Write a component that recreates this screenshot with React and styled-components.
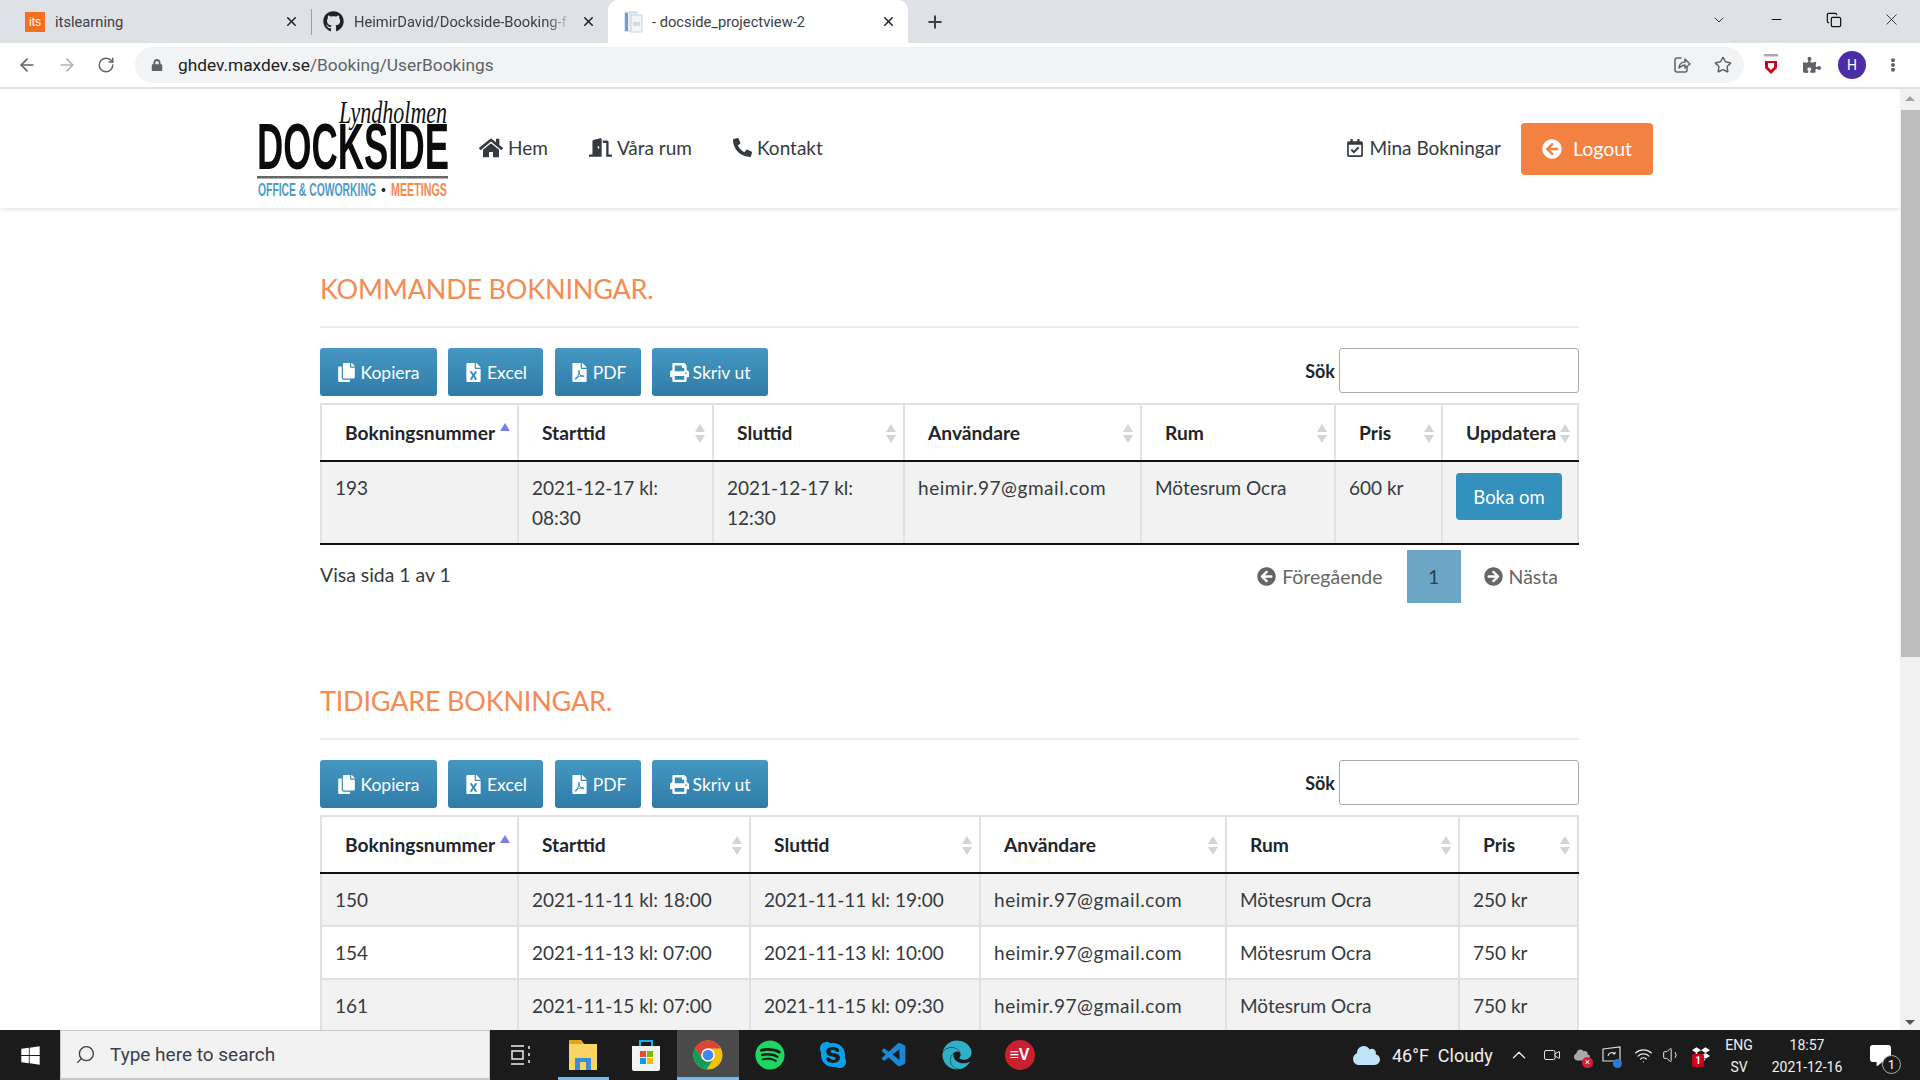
import React from "react";
import styled, { createGlobalStyle } from "styled-components";
import {
  FaHome, FaDoorOpen, FaPhone, FaRegCalendarCheck, FaArrowCircleLeft, FaArrowCircleRight,
  FaCopy, FaFileExcel, FaFilePdf, FaPrint, FaGithub, FaSpotify, FaSkype, FaWindows,
  FaPuzzlePiece, FaLock, FaCloud, FaDropbox, FaCommentAlt, FaEllipsisV, FaEdge,
} from "react-icons/fa";
import { VscVscode } from "react-icons/vsc";
import {
  ArrowLeft, ArrowRight, RotateCw, Star, Plus, X, ChevronDown, Minus, Copy, Search,
  ChevronUp, Video, Wifi, Volume1,
} from "lucide-react";

const Global = createGlobalStyle`
  html, body { margin: 0; padding: 0; height: 100%; overflow: hidden; background: #fff; }
  * { box-sizing: border-box; }
  #root { height: 100%; }
`;

const Shell = styled.div`
  height: 1080px; width: 1920px; display: flex; flex-direction: column; overflow: hidden;
  font-family: Lato, "Liberation Sans", sans-serif; color: #212529;
`;
const TabStrip = styled.div`
  height: 43px; background: #dee1e6; display: flex; align-items: stretch; flex: none;
`;
const Tab = styled.div`
  width: ${p => p.$w}px; padding-left: ${p => p.$pl}px; padding-right: 12px; display: flex; align-items: center;
  font: 14.7px Roboto, sans-serif; color: #3c4043; position: relative;
  background: ${p => p.$active ? "#fff" : "transparent"};
  border-radius: ${p => p.$active ? "10px 10px 0 0" : "0"};
`;
const TabDivider = styled.div`
  width: 1px; height: 26px; background: #9aa0a6; align-self: center; flex: none;
`;
const Favicon = styled.span`
  width: 20px; height: 20px; background: #f37021; color: #fff; font: 12px "Liberation Sans", sans-serif;
  display: flex; align-items: center; justify-content: center; flex: none;
`;
const TabTitle = styled.span`
  margin-left: ${p => p.$ml}px; width: ${p => p.$w}px; white-space: nowrap; overflow: hidden; flex: none;
  ${p => p.$fade ? "mask-image: linear-gradient(90deg, #000 88%, transparent);" : ""}
`;
const TabClose = styled.span`
  margin-left: auto; display: flex; color: #202124;
`;
const NewTab = styled.div`
  width: 54px; display: flex; align-items: center; justify-content: center; color: #3c4043;
`;
const WindowControls = styled.div`
  margin-left: auto; display: flex; align-items: center; color: #111;
`;
const WinButton = styled.div`
  width: 57.5px; display: flex; justify-content: center; padding-bottom: 4px;
`;
const Toolbar = styled.div`
  height: 46px; flex: none; background: #fff; border-bottom: 2px solid #e0e0e0; display: flex; align-items: flex-start;
  padding-top: 4px;
`;
const NavButtons = styled.div`
  width: 135px; height: 36px; display: flex; align-items: center; padding-left: 17px; gap: 20px; flex: none; color: #5f6368;
`;
const AddressBar = styled.div`
  width: 1609px; height: 36px; background: #f1f3f4; border-radius: 18px; display: flex; align-items: center; padding-left: 16px; flex: none;
`;
const Url = styled.span`
  font: 17.3px Roboto, sans-serif; color: #5f6368; margin-left: 15px;
  b { font-weight: 400; color: #202124; }
`;
const AddressActions = styled.div`
  margin-left: auto; display: flex; align-items: center; gap: 22px; color: #5f6368; padding-right: 12px;
`;
const ToolIcons = styled.div`
  display: flex; align-items: center; height: 36px; flex: 1; padding-left: 19px; color: #5f6368; gap: 17px;
`;
const Puzzle = styled(FaPuzzlePiece)`
  margin-left: 7px;
`;
const Dots = styled(FaEllipsisV)`
  margin-left: 3px;
`;
const Avatar = styled.div`
  width: 28px; height: 28px; border-radius: 50%; background: #4a2ea5; color: #fff; font: 14px Roboto, sans-serif;
  display: flex; align-items: center; justify-content: center; flex: none;
`;

const Body = styled.div`
  flex: 1; min-height: 0; display: flex;
`;
const Main = styled.main`
  flex: 1; min-width: 0; overflow: hidden; background: #fff;
`;
const Scrollbar = styled.div`
  width: 20px; flex: none; background: #f1f1f1; display: flex; flex-direction: column; align-items: flex-end; position: relative;
`;
const ScrollArrow = styled.div`
  width: 0; height: 0; border-left: 5px solid transparent; border-right: 5px solid transparent;
  ${p => p.$down ? "border-top: 5px solid #555;" : "border-bottom: 5px solid #a3a3a3;"}
  margin: ${p => p.$down ? "auto 5px 5px" : "7px 5px 9px"};
`;
const ScrollThumb = styled.div`
  width: 19px; height: 547px; background: #bdbdbd;
`;

const Navbar = styled.header`
  height: 119px; background: #fff; box-shadow: 0 1px 5px rgba(0,0,0,.13); display: flex; align-items: center; padding: 0 247px 2px 255px;
  position: relative; color: #343a40;
`;
const Menu = styled.nav`
  display: flex; align-items: center; margin-left: 28px; gap: 41px;
`;
const MenuItem = styled.a`
  display: flex; align-items: center; gap: 5px; font-size: 19px; color: #343a40;
`;
const PhoneIcon = styled(FaPhone)`
  transform: scaleX(-1);
`;
const Logout = styled.button`
  width: 132px; height: 52px; margin: 2px 0 0 20px; background: #f28142; border: 0; border-radius: 4px; color: #fff;
  font: 19.5px Lato, sans-serif; display: flex; align-items: center; justify-content: center; gap: 11px;
`;
const NavRight = styled.div`
  margin-left: auto; display: flex; align-items: center;
`;

const Content = styled.div`
  width: 1259px; margin-left: 320px; padding-top: 61px;
`;
const Section = styled.section`
  & + & { margin-top: 78px; }
`;
const Heading = styled.h2`
  margin: 0; font-size: 27px; font-weight: 400; line-height: 40px; color: #f58b52; letter-spacing: -.2px;
`;
const Rule = styled.div`
  height: 2px; background: #ececec; margin: 17px 0 20px;
`;
const ToolRow = styled.div`
  display: flex; align-items: flex-start; height: 48px; margin-bottom: 7px;
`;
const ExportButton = styled.button`
  height: 48px; width: ${p => p.$w}px; margin-right: ${p => p.$mr}px; border: 0; border-radius: 3px; color: #fff;
  background: linear-gradient(#4597c2, #2e7da8); font: 17.5px Lato, sans-serif; padding: 0;
  display: flex; align-items: center; justify-content: center; gap: 4px;
`;
const SearchBox = styled.label`
  margin-left: auto; display: flex; align-items: center; gap: 4px; font-size: 18px; font-weight: 700;
`;
const SearchField = styled.input`
  width: 240px; height: 45px; border: 1px solid #aaa; border-radius: 3px; background: #fff; padding: 0 6px;
`;
const Table = styled.table`
  width: 1257px; table-layout: fixed; border-collapse: collapse; font-size: 19px;
`;
const Col = styled.col`
  width: ${p => p.$w}px;
`;
const Th = styled.th`
  height: 57px; padding: 0 20px 0 23px; text-align: left; font-size: 19.2px; font-weight: 700; position: relative; white-space: nowrap;
  border: 2px solid #dee2e6; border-bottom: 2px solid #111;
  color: #212529;
`;
const SortUp = styled.i`
  position: absolute; right: 7px; top: ${p => p.$active ? 18 : 19}px; width: 0; height: 0;
  border-left: 5px solid transparent; border-right: 5px solid transparent;
  border-bottom: 8px solid ${p => p.$active ? "#7d7fdc" : "#d4d4d4"};
`;
const SortDown = styled.i`
  position: absolute; right: 7px; top: 30px; width: 0; height: 0;
  border-left: 5px solid transparent; border-right: 5px solid transparent;
  border-top: 8px solid #d4d4d4;
`;
const Td = styled.td`
  padding: 11px 13px 10px; line-height: 30px; vertical-align: top; border-left: 2px solid #dee2e6; border-right: 2px solid #dee2e6;
  border-top: 2px solid #dee2e6; background: ${p => p.$odd ? "#f2f2f2" : "#fff"};
  border-bottom: ${p => p.$last ? "2px solid #111" : "2px solid #dee2e6"};
  tr:first-child > & { border-top: 2px solid #111; }
  color: #343a40;
  letter-spacing: ${p => p.$wide ? ".55px" : "0"};
`;
const TdAction = styled(Td)`
  padding: 11px 13px 0;
`;
const BookAgain = styled.button`
  width: 106px; height: 47px; background: #3490bd; border: 0; border-radius: 4px; color: #fff; font: 18.5px Lato, sans-serif; padding: 0;
`;
const Footer = styled.div`
  display: flex; align-items: flex-start; margin-top: 5px; height: 53px;
`;
const Info = styled.div`
  font-size: 19.4px; line-height: 50px; color: #343a40;
`;
const Pager = styled.div`
  margin-left: auto; display: flex; align-items: stretch; height: 53px; color: #666; font-size: 19.5px; padding-right: 21px;
`;
const PageLink = styled.a`
  display: flex; align-items: center; gap: 6px; margin: ${p => p.$m};
`;
const PageCurrent = styled.span`
  width: 54px; background: #6ba7c5; color: #2c3e50; display: flex; align-items: center; justify-content: center;
`;

const Taskbar = styled.footer`
  height: 50px; flex: none; background: #1b1b1b; display: flex; align-items: stretch; color: #fff; font-family: Roboto, sans-serif;
`;
const StartSlot = styled.div`
  width: 60px; display: flex; align-items: center; justify-content: center;
`;
const SearchTask = styled.div`
  width: 430px; background: #f2f2f2; border: 1px solid #c8c8c8; border-bottom-width: 2px; display: flex; align-items: center; padding-left: 14px; gap: 14px;
  font-size: 19px; color: #3a3f47;
`;
const SearchGlass = styled(Search)`
  transform: scaleX(-1);
`;
const TaskSlot = styled.div`
  width: 62.3px; flex: none; display: flex; align-items: center; justify-content: center; position: relative;
  background: ${p => p.$current ? "#4a4a4a" : "transparent"};
  &::after {
    content: ""; position: absolute; bottom: 0; height: ${p => p.$open ? 3 : 0}px; background: #76b9ed;
    left: ${p => p.$current ? 0 : 6}px; right: ${p => p.$current ? 0 : 6}px;
  }
`;
const Tray = styled.div`
  margin-left: auto; display: flex; align-items: center; padding-right: 12px;
`;
const TraySlot = styled.div`
  width: ${p => p.$w}px; flex: none; display: flex; align-items: center; justify-content: center; position: relative; color: #e8e8e8; height: 50px;
`;
const Weather = styled.span`
  width: 108px; flex: none; font-size: 18px; white-space: pre; color: #f0f0f0;
`;
const TrayText = styled.div`
  width: ${p => p.$w}px; flex: none; text-align: center; font-size: 14px; line-height: 22px; color: #f0f0f0; padding-top: 2px;
`;
const CountBadge = styled.span`
  position: absolute; right: 7px; bottom: 6px; width: 19px; height: 19px; border-radius: 50%; background: #1b1b1b; border: 1px solid #aaa;
  font-size: 13px; display: flex; align-items: center; justify-content: center; color: #fff;
`;
const RedBadge = styled.span`
  position: absolute; left: 6px; bottom: 13px; width: 12px; height: 13px; border-radius: 2px; background: #d0021b; color: #fff;
  font-size: 10px; font-weight: 700; display: flex; align-items: center; justify-content: center;
`;
const ErrorDot = styled.span`
  position: absolute; right: 3px; bottom: 12px; width: 11px; height: 11px; border-radius: 50%; background: #d0213a; color: #fff; font-size: 9px; line-height: 11px; text-align: center;
`;
const BlueDot = styled.span`
  position: absolute; right: 6px; bottom: 12px; width: 9px; height: 9px; border-radius: 50%; background: #2d7ad6;
`;
const LogoSvg = styled.svg`
  flex: none;
`;

const Logo = () => (
  <LogoSvg width="196" height="100" viewBox="0 0 196 100" aria-label="Dockside logo">
    <text x="84" y="25" fontFamily="Liberation Serif" fontStyle="italic" fontSize="32" fill="#111" textLength="108" lengthAdjust="spacingAndGlyphs">Lyndholmen</text>
    <text x="2" y="71" fontFamily="Liberation Sans" fontWeight="700" fontSize="64" fill="#0b0b0b" textLength="192" lengthAdjust="spacingAndGlyphs">DOCKSIDE</text>
    <rect x="2" y="78" width="191" height="2.5" fill="#666" />
    <text x="3" y="98" fontFamily="Liberation Sans" fontWeight="700" fontSize="19" fill="#4b9ccb" textLength="118" lengthAdjust="spacingAndGlyphs">OFFICE &amp; COWORKING</text>
    <circle cx="128.5" cy="92" r="2" fill="#222" />
    <text x="136" y="98" fontFamily="Liberation Sans" fontWeight="700" fontSize="19" fill="#f58b52" textLength="56" lengthAdjust="spacingAndGlyphs">MEETINGS</text>
  </LogoSvg>
);

const ShareIcon = () => (
  <svg width="20" height="20" viewBox="0 0 20 20" fill="none" stroke="currentColor" strokeWidth="1.5" strokeLinecap="round" strokeLinejoin="round">
    <path d="M9 3H5a2 2 0 0 0-2 2v10a2 2 0 0 0 2 2h8a2 2 0 0 0 2-2v-3" />
    <path d="M7 13c0-4 3-6 6-6V4l5 5-5 4v-3c-2 0-4 1-6 3z" />
  </svg>
);
const McAfee = () => (
  <svg width="16" height="24" viewBox="0 0 16 24">
    <rect x="1" y="1" width="14" height="2.5" fill="#aaa" />
    <path d="M2 8h12v7l-6 6-6-6z" fill="#d0021b" />
    <path d="M5 10h6v4l-3 3-3-3z" fill="#fff" />
  </svg>
);
const DocIcon = () => (
  <svg width="20" height="22" viewBox="0 0 20 22">
    <rect x="1" y="1" width="12" height="19" fill="#e8edf3" stroke="#c8d0da" />
    <rect x="1" y="2" width="3" height="18" fill="#6e9fd0" />
    <rect x="7" y="4" width="11" height="17" fill="#f3f5f8" stroke="#ccd3dc" />
    <rect x="9" y="11" width="7" height="4" fill="#d5dbe3" />
  </svg>
);
const FolderIcon = () => (
  <svg width="30" height="34" viewBox="0 0 30 34">
    <path d="M1 2h12l3 4h13v26H1z" fill="#fcd462" />
    <path d="M1 2h12l2 4H1z" fill="#e2a31d" />
    <rect x="7" y="20" width="16" height="12" fill="#3a8fd9" />
    <rect x="12" y="24" width="6" height="8" fill="#fcd462" />
  </svg>
);
const StoreIcon = () => (
  <svg width="30" height="34" viewBox="0 0 30 34">
    <path d="M9 8V3h12v5" fill="none" stroke="#1ab0e8" strokeWidth="2" />
    <path d="M1 8h28v23a2 2 0 0 1-2 2H3a2 2 0 0 1-2-2z" fill="#f2f2f2" />
    <rect x="9" y="13" width="6" height="6" fill="#e74c2b" />
    <rect x="16" y="13" width="6" height="6" fill="#7fba00" />
    <rect x="9" y="20" width="6" height="6" fill="#0a9be8" />
    <rect x="16" y="20" width="6" height="6" fill="#fdb900" />
  </svg>
);
const ChromeIcon = () => (
  <svg width="30" height="30" viewBox="0 0 30 30">
    <circle cx="15" cy="15" r="14.5" fill="#f4c20d" />
    <path d="M15 .5A14.5 14.5 0 0 0 2.4 7.8L8.7 18.6 15 8.5h12.6A14.5 14.5 0 0 0 15 .5z" fill="#db4437" />
    <path d="M2.4 7.8A14.5 14.5 0 0 0 13.5 29.4l6.3-9.6L8.7 18.6z" fill="#0f9d58" />
    <circle cx="15" cy="15" r="6.8" fill="#fff" />
    <circle cx="15" cy="15" r="5.3" fill="#4285f4" />
  </svg>
);

const ExpressVpn = styled.span`
  width: 30px; height: 30px; border-radius: 50%; background: #c8202f; color: #fff; font: 700 16px "Liberation Sans", sans-serif;
  display: flex; align-items: center; justify-content: center;
`;

const exportButtons = [
  { label: "Kopiera", w: 117, mr: 11, Icon: FaCopy },
  { label: "Excel", w: 95, mr: 12, Icon: FaFileExcel },
  { label: "PDF", w: 86, mr: 11, Icon: FaFilePdf },
  { label: "Skriv ut", w: 116, mr: 0, Icon: FaPrint },
];

const upcoming = {
  title: "KOMMANDE BOKNINGAR.",
  cols: [
    ["Bokningsnummer", 197], ["Starttid", 195], ["Sluttid", 191], ["Användare", 237],
    ["Rum", 194], ["Pris", 107], ["Uppdatera", 136],
  ],
  rows: [["193", "2021-12-17 kl: 08:30", "2021-12-17 kl: 12:30", "heimir.97@gmail.com", "Mötesrum Ocra", "600 kr", null]],
  pager: true,
};
const past = {
  title: "TIDIGARE BOKNINGAR.",
  cols: [
    ["Bokningsnummer", 197], ["Starttid", 232], ["Sluttid", 230], ["Användare", 246],
    ["Rum", 233], ["Pris", 119],
  ],
  rows: [
    ["150", "2021-11-11 kl: 18:00", "2021-11-11 kl: 19:00", "heimir.97@gmail.com", "Mötesrum Ocra", "250 kr"],
    ["154", "2021-11-13 kl: 07:00", "2021-11-13 kl: 10:00", "heimir.97@gmail.com", "Mötesrum Ocra", "750 kr"],
    ["161", "2021-11-15 kl: 07:00", "2021-11-15 kl: 09:30", "heimir.97@gmail.com", "Mötesrum Ocra", "750 kr"],
  ],
  pager: false,
};

const BookingSection = ({ title, cols, rows, pager }) => (
  <Section>
    <Heading>{title}</Heading>
    <Rule />
    <ToolRow>
      {exportButtons.map(({ label, w, mr, Icon }) => (
        <ExportButton key={label} $w={w} $mr={mr}><Icon size={19} />{label}</ExportButton>
      ))}
      <SearchBox>Sök<SearchField type="text" /></SearchBox>
    </ToolRow>
    <Table>
      <colgroup>{cols.map(([n, w]) => <Col key={n} $w={w} />)}</colgroup>
      <thead>
        <tr>
          {cols.map(([n], i) => (
            <Th key={n}>{n}<SortUp $active={i === 0} />{i !== 0 && <SortDown />}</Th>
          ))}
        </tr>
      </thead>
      <tbody>
        {rows.map((r, ri) => (
          <tr key={r[0]}>
            {r.map((c, ci) => c === null
              ? <TdAction key={ci} $odd={ri % 2 === 0} $last={pager}><BookAgain>Boka om</BookAgain></TdAction>
              : <Td key={ci} $odd={ri % 2 === 0} $last={pager} $wide={ci === 3}>{c}</Td>)}
          </tr>
        ))}
      </tbody>
    </Table>
    {pager && (
      <Footer>
        <Info>Visa sida 1 av 1</Info>
        <Pager>
          <PageLink $m="0 24px 0 0"><FaArrowCircleLeft size={19} />Föregående</PageLink>
          <PageCurrent>1</PageCurrent>
          <PageLink $m="0 0 0 23px"><FaArrowCircleRight size={19} />Nästa</PageLink>
        </Pager>
      </Footer>
    )}
  </Section>
);

export default function App() {
  return (
    <Shell>
      <Global />
      <TabStrip>
        <Tab $w={311} $pl={25}>
          <Favicon>its</Favicon><TabTitle $ml={10} $w={200}>itslearning</TabTitle>
          <TabClose><X size={15} strokeWidth={2.4} /></TabClose>
        </Tab>
        <TabDivider />
        <Tab $w={296} $pl={11}>
          <FaGithub size={21} color="#202124" /><TabTitle $ml={10} $w={218} $fade>HeimirDavid/Dockside-Booking-f</TabTitle>
          <TabClose><X size={15} strokeWidth={2.4} /></TabClose>
        </Tab>
        <Tab $w={300} $pl={16} $active>
          <DocIcon /><TabTitle $ml={8} $w={200}>- docside_projectview-2</TabTitle>
          <TabClose><X size={15} strokeWidth={2.4} /></TabClose>
        </Tab>
        <NewTab><Plus size={20} strokeWidth={2.4} /></NewTab>
        <WindowControls>
          <WinButton><ChevronDown size={16} strokeWidth={1.2} /></WinButton>
          <WinButton><Minus size={15} strokeWidth={1.6} /></WinButton>
          <WinButton><Copy size={16} strokeWidth={1.8} /></WinButton>
          <WinButton><X size={19} strokeWidth={1} /></WinButton>
        </WindowControls>
      </TabStrip>
      <Toolbar>
        <NavButtons>
          <ArrowLeft size={20} strokeWidth={2} />
          <ArrowRight size={20} strokeWidth={2} color="#b0b3b8" />
          <RotateCw size={18} strokeWidth={2} />
        </NavButtons>
        <AddressBar>
          <FaLock size={12} color="#5f6368" />
          <Url><b>ghdev.maxdev.se</b>/Booking/UserBookings</Url>
          <AddressActions>
            <ShareIcon />
            <Star size={18} strokeWidth={2} />
          </AddressActions>
        </AddressBar>
        <ToolIcons>
          <McAfee />
          <Puzzle size={18} />
          <Avatar>H</Avatar>
          <Dots size={14} />
        </ToolIcons>
      </Toolbar>
      <Body>
        <Main>
          <Navbar>
            <Logo />
            <Menu>
              <MenuItem><FaHome size={24} />Hem</MenuItem>
              <MenuItem><FaDoorOpen size={23} />Våra rum</MenuItem>
              <MenuItem><PhoneIcon size={19} />Kontakt</MenuItem>
            </Menu>
            <NavRight>
              <MenuItem><FaRegCalendarCheck size={18} />Mina Bokningar</MenuItem>
              <Logout><FaArrowCircleLeft size={20} />Logout</Logout>
            </NavRight>
          </Navbar>
          <Content>
            <BookingSection {...upcoming} />
            <BookingSection {...past} />
          </Content>
        </Main>
        <Scrollbar>
          <ScrollArrow />
          <ScrollThumb />
          <ScrollArrow $down />
        </Scrollbar>
      </Body>
      <Taskbar>
        <StartSlot><FaWindows size={21} /></StartSlot>
        <SearchTask><SearchGlass size={21} strokeWidth={1.5} />Type here to search</SearchTask>
        <TaskSlot>
          <svg width="22" height="22" viewBox="0 0 22 22" fill="none" stroke="#eee" strokeWidth="1.5">
            <path d="M1 2h13M1 20h13M2 7h11v8H2zM19 2v3M19 9v3M19 16v3" />
          </svg>
        </TaskSlot>
        <TaskSlot $open><FolderIcon /></TaskSlot>
        <TaskSlot><StoreIcon /></TaskSlot>
        <TaskSlot $open $current><ChromeIcon /></TaskSlot>
        <TaskSlot><FaSpotify size={30} color="#1ed760" /></TaskSlot>
        <TaskSlot><FaSkype size={30} color="#0a9fe6" /></TaskSlot>
        <TaskSlot><VscVscode size={29} color="#1b87d8" /></TaskSlot>
        <TaskSlot><FaEdge size={30} color="#2fb0c8" /></TaskSlot>
        <TaskSlot><ExpressVpn>≡V</ExpressVpn></TaskSlot>
        <Tray>
          <TraySlot $w={52}><FaCloud size={27} color="#bfe3f7" /></TraySlot>
          <Weather>46°F  Cloudy</Weather>
          <TraySlot $w={37}><ChevronUp size={22} strokeWidth={1.5} /></TraySlot>
          <TraySlot $w={30}><Video size={18} strokeWidth={1.3} /></TraySlot>
          <TraySlot $w={29}><FaCloud size={16} color="#aaa" /><ErrorDot>×</ErrorDot></TraySlot>
          <TraySlot $w={32}>
            <svg width="20" height="20" viewBox="0 0 20 20" fill="none" stroke="#ddd" strokeWidth="1.2"><path d="M1 4l17-2v14H1z" /><path d="M6 11a4 4 0 0 1 7-2M13 9l-2 0M13 9V7" /></svg>
            <BlueDot />
          </TraySlot>
          <TraySlot $w={30}><Wifi size={19} strokeWidth={1.5} /></TraySlot>
          <TraySlot $w={28}><Volume1 size={20} strokeWidth={1.2} /></TraySlot>
          <TraySlot $w={30}><FaDropbox size={18} color="#fff" /><RedBadge>1</RedBadge></TraySlot>
          <TrayText $w={46}>ENG<br />SV</TrayText>
          <TrayText $w={90}>18:57<br />2021-12-16</TrayText>
          <TraySlot $w={56}><FaCommentAlt size={21} color="#fff" /><CountBadge>1</CountBadge></TraySlot>
        </Tray>
      </Taskbar>
    </Shell>
  );
}
